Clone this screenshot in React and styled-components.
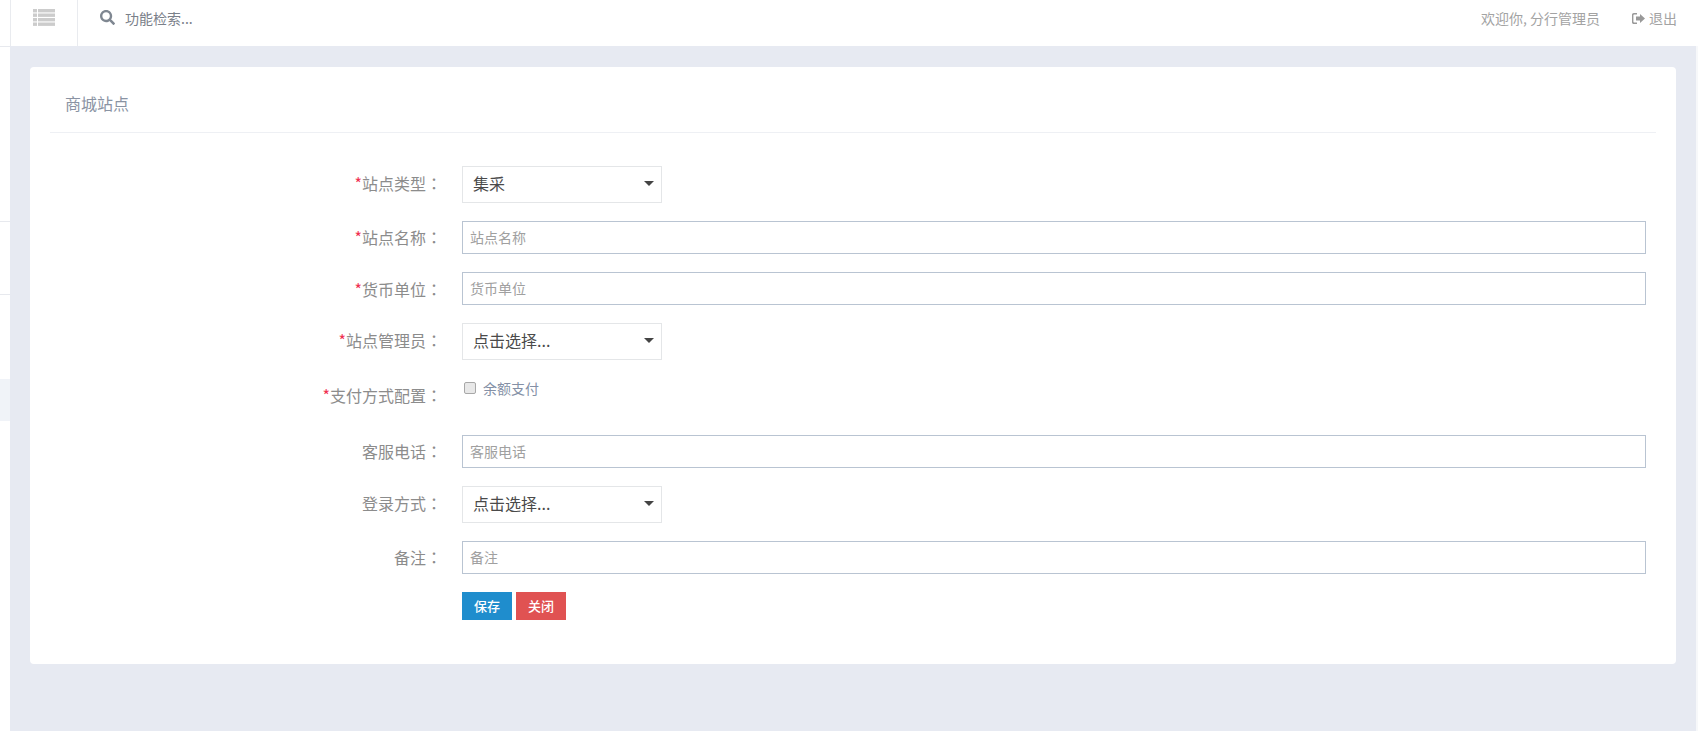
import React from "react";
import styled, { createGlobalStyle } from "styled-components";
import { FaSearch } from "react-icons/fa";

const FONT = `"Noto Sans CJK SC", "Liberation Sans", sans-serif`;

const GlobalStyle = createGlobalStyle`
  html, body {
    margin: 0;
    padding: 0;
    height: 100%;
    overflow: hidden;
    background: #ffffff;
    font-family: ${FONT};
  }
  * {
    box-sizing: border-box;
  }
`;

const ListIcon = () => (
  <svg width="22" height="17" viewBox="0 0 22 17" fill="#cccccc">
    <rect x="0" y="0" width="4" height="3.4" />
    <rect x="5" y="0" width="17" height="3.4" />
    <rect x="0" y="4.5" width="4" height="3.4" />
    <rect x="5" y="4.5" width="17" height="3.4" />
    <rect x="0" y="9" width="4" height="3.4" />
    <rect x="5" y="9" width="17" height="3.4" />
    <rect x="0" y="13.5" width="4" height="3.4" />
    <rect x="5" y="13.5" width="17" height="3.4" />
  </svg>
);

const ExitIcon = () => (
  <svg width="13" height="11" viewBox="0 0 13 11" fill="#999999">
    <path d="M1.8 0H5v1.4H2.2c-.5 0-.8.3-.8.8v6.6c0 .5.3.8.8.8H5V11H1.8C.8 11 0 10.2 0 9.2V1.8C0 .8.8 0 1.8 0z" />
    <path d="M8 1l5 4.5L8 10V7.4H4V3.6h4z" />
  </svg>
);

const Row = ({ label, required, children, tall, lift }) => (
  <FormRow $tall={tall}>
    <Label $tall={tall} $lift={lift}>
      {required && <Star>*</Star>}
      {label}
      <Colon>：</Colon>
    </Label>
    {children}
  </FormRow>
);

const Dropdown = ({ value }) => (
  <SelectBox>
    {value}
    <Caret />
  </SelectBox>
);

const App = () => {
  return (
    <Page>
      <GlobalStyle />
      <Sidebar>
        <SideItem $h={47} />
        <SideItem $h={175} />
        <SideItem $h={73} />
        <SideGap />
        <SideActive />
      </Sidebar>
      <Content>
        <Header>
          <MenuToggle>
            <ListIcon />
          </MenuToggle>
          <SearchArea>
            <FaSearch size={15} color="#7f8791" />
            <SearchText>功能检索...</SearchText>
          </SearchArea>
          <HeaderRight>
            <Welcome>欢迎你, 分行管理员</Welcome>
            <Logout>
              <ExitIcon />
              退出
            </Logout>
          </HeaderRight>
        </Header>
        <Main>
          <Card>
            <CardTitle>商城站点</CardTitle>
            <Form>
              <Row label="站点类型" required lift={4}>
                <Dropdown value="集采" />
              </Row>
              <Row label="站点名称" required lift={2}>
                <TextInput placeholder="站点名称" />
              </Row>
              <Row label="货币单位" required>
                <TextInput placeholder="货币单位" />
              </Row>
              <Row label="站点管理员" required lift={4}>
                <Dropdown value="点击选择..." />
              </Row>
              <Row label="支付方式配置" required tall>
                <CheckLabel>
                  <CheckBox />
                  余额支付
                </CheckLabel>
              </Row>
              <Row label="客服电话" lift={2}>
                <TextInput placeholder="客服电话" />
              </Row>
              <Row label="登录方式" lift={4}>
                <Dropdown value="点击选择..." />
              </Row>
              <Row label="备注" lift={2}>
                <TextInput placeholder="备注" />
              </Row>
              <Buttons>
                <Button $bg="#1f8dcd">保存</Button>
                <Button $bg="#e05252">关闭</Button>
              </Buttons>
            </Form>
          </Card>
        </Main>
      </Content>
    </Page>
  );
};

export default App;

const Page = styled.div`
  display: flex;
  width: 1698px;
  height: 731px;
  overflow: hidden;
`;

const Sidebar = styled.aside`
  width: 10px;
  flex: none;
  display: flex;
  flex-direction: column;
  background: #ffffff;
`;

const SideItem = styled.div`
  height: ${(p) => p.$h}px;
  border-bottom: 1px solid #e7e9ee;
`;

const SideGap = styled.div`
  height: 84px;
`;

const SideActive = styled.div`
  height: 42px;
  background: #f0f3f8;
`;

const Content = styled.div`
  flex: 1;
  min-width: 0;
  display: flex;
  flex-direction: column;
  background: #f7f8fa;
`;

const Header = styled.header`
  height: 46px;
  flex: none;
  display: flex;
  background: #ffffff;
  border-left: 1px solid #e9ebef;
`;

const MenuToggle = styled.div`
  width: 67px;
  height: 46px;
  display: flex;
  justify-content: center;
  padding: 9px 0 0 0;
  border-right: 1px solid #e9ebef;
`;

const SearchArea = styled.div`
  display: flex;
  align-items: flex-start;
  gap: 10px;
  padding: 10px 0 0 22px;
  font-size: 14px;
  line-height: 16px;
`;

const SearchText = styled.span`
  color: #7a8089;
`;

const HeaderRight = styled.div`
  margin-left: auto;
  display: flex;
  gap: 32px;
  padding: 10px 21px 0 0;
  font-size: 14px;
  line-height: 16px;
  color: #a3a3a3;
`;

const Welcome = styled.span``;

const Logout = styled.span`
  display: flex;
  align-items: center;
  gap: 4px;
  height: 16px;
`;

const Main = styled.main`
  flex: 1;
  background: #e7eaf2;
  margin-right: 2px;
  padding: 21px 20px 0 20px;
`;

const Card = styled.section`
  height: 597px;
  background: #ffffff;
  border-radius: 4px;
  padding: 0 20px;
`;

const CardTitle = styled.h2`
  margin: 0;
  height: 66px;
  padding: 26px 0 0 15px;
  font-size: 16px;
  line-height: 20px;
  font-weight: 400;
  color: #8a93a3;
  border-bottom: 1px solid #eef0f4;
`;

const Form = styled.form`
  padding: 33px 10px 0 0;
`;

const FormRow = styled.div`
  display: flex;
  align-items: ${(p) => (p.$tall ? "flex-start" : "center")};
  margin-bottom: ${(p) => (p.$tall ? "0" : "18px")};
  height: ${(p) => (p.$tall ? "57px" : "auto")};
`;

const Label = styled.label`
  width: 412px;
  flex: none;
  padding: ${(p) => (p.$tall ? "6px 20px 0 0" : `0 20px ${p.$lift || 0}px 0`)};
  text-align: right;
  font-size: 16px;
  line-height: 22px;
  color: #8c8c8c;
`;

const Colon = styled.span`
  font-family: "Noto Sans CJK TC", sans-serif;
`;

const Star = styled.span`
  color: #f0304f;
`;

const SelectBox = styled.div`
  position: relative;
  width: 200px;
  height: 37px;
  padding-left: 10px;
  border: 1px solid #e4e6e8;
  font-size: 16px;
  line-height: 32px;
  color: #4a4a4a;
`;

const Caret = styled.span`
  position: absolute;
  right: 7px;
  top: 14px;
  border-style: solid;
  border-width: 5px 5.5px 0 5.5px;
  border-color: #444444 transparent transparent transparent;
`;

const TextInput = styled.input`
  flex: 1;
  min-width: 0;
  height: 33px;
  padding: 0 7px 2px 7px;
  border: 1px solid #b9c4d2;
  border-radius: 0;
  outline: none;
  font-family: ${FONT};
  font-size: 14px;
  color: #444444;
  &::placeholder {
    color: #a0a0a0;
    opacity: 1;
  }
`;

const CheckLabel = styled.div`
  display: flex;
  align-items: center;
  gap: 7px;
  padding: 1px 0 0 2px;
  font-size: 14px;
  line-height: 18px;
  color: #8490a6;
`;

const CheckBox = styled.span`
  width: 12px;
  height: 12px;
  border: 1px solid #a8a8a8;
  border-radius: 2px;
  background: #e8e8e8;
`;

const Buttons = styled.div`
  display: flex;
  gap: 4px;
  margin-left: 412px;
`;

const Button = styled.button`
  width: 50px;
  height: 28px;
  padding: 0 0 2px 0;
  border: none;
  border-radius: 0;
  background: ${(p) => p.$bg};
  color: #ffffff;
  font-family: ${FONT};
  font-size: 13px;
  font-weight: 500;
`;
